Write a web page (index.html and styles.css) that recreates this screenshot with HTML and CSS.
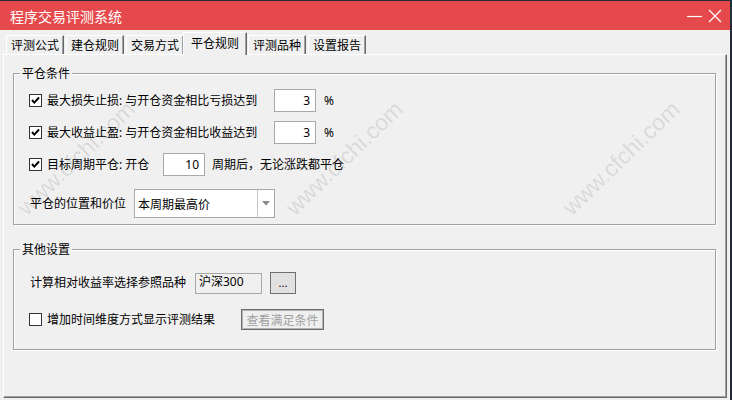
FILE: index.html
```html
<!DOCTYPE html>
<html lang="zh-CN">
<head>
<meta charset="utf-8">
<title>程序交易评测系统</title>
<link rel="stylesheet" href="styles.css">
</head>
<body>
<div class="screen">
  <div class="window">
    <div class="titlebar">
      <span class="title">程序交易评测系统</span>
      <div class="controls">
        <svg class="ic-min" width="15" height="3" viewBox="0 0 15 3"><line x1="0" y1="1.5" x2="15" y2="1.5" stroke="#fff" stroke-width="1.2"/></svg>
        <svg class="ic-close" width="14" height="14" viewBox="0 0 14 14"><path d="M1 1 L13 13 M13 1 L1 13" stroke="#fff" stroke-width="1.3" fill="none"/></svg>
      </div>
    </div>
    <div class="tabs">
      <div class="tab">评测公式</div>
      <div class="tab">建仓规则</div>
      <div class="tab">交易方式</div>
      <div class="tab active">平仓规则</div>
      <div class="tab">评测品种</div>
      <div class="tab">设置报告</div>
    </div>
    <div class="panel">
      <div class="group g1">
        <span class="group-title">平仓条件</span>
        <div class="row r-input">
          <span class="cb"><svg width="11" height="11" viewBox="0 0 11 11"><path d="M2 5 L4.3 7.6 L9 2.5" stroke="#000" stroke-width="2" fill="none"/></svg></span>
          <span class="lbl w-long">最大损失止损: 与开仓资金相比亏损达到</span>
          <span class="num">3</span>
          <span class="unit">%</span>
        </div>
        <div class="row r-input">
          <span class="cb"><svg width="11" height="11" viewBox="0 0 11 11"><path d="M2 5 L4.3 7.6 L9 2.5" stroke="#000" stroke-width="2" fill="none"/></svg></span>
          <span class="lbl w-long">最大收益止盈: 与开仓资金相比收益达到</span>
          <span class="num">3</span>
          <span class="unit">%</span>
        </div>
        <div class="row r-input">
          <span class="cb"><svg width="11" height="11" viewBox="0 0 11 11"><path d="M2 5 L4.3 7.6 L9 2.5" stroke="#000" stroke-width="2" fill="none"/></svg></span>
          <span class="lbl w-short">目标周期平仓: 开仓</span>
          <span class="num">10</span>
          <span class="after">周期后，无论涨跌都平仓</span>
        </div>
        <div class="row r-combo">
          <span class="lbl w-combo">平仓的位置和价位</span>
          <div class="combo">
            <span class="combo-text">本周期最高价</span>
            <span class="combo-btn"><svg width="8" height="5" viewBox="0 0 8 5"><path d="M0 0 L8 0 L4 4.5 Z" fill="#8a8a8a"/></svg></span>
          </div>
        </div>
      </div>
      <div class="group g2">
        <span class="group-title">其他设置</span>
        <div class="row r-ref">
          <span class="lbl">计算相对收益率选择参照品种</span>
          <span class="ref-box">沪深300</span>
          <span class="btn-more">...</span>
        </div>
        <div class="row r-time">
          <span class="cb"></span>
          <span class="lbl">增加时间维度方式显示评测结果</span>
          <span class="btn-disabled">查看满足条件</span>
        </div>
      </div>
    </div>
  </div>
  <div class="wm wm1">www.cfchi.com</div>
  <div class="wm wm2">www.cfchi.com</div>
  <div class="wm wm3">www.cfchi.com</div>
</div>
</body>
</html>
```

FILE: styles.css
```css
* { box-sizing: border-box; }
html, body { margin: 0; padding: 0; }
body {
  background: #262b38;
  font-family: "Noto Sans", "Noto Sans CJK SC", sans-serif;
  font-size: 12px;
  line-height: 16px;
  color: #000;
}
.screen {
  position: relative;
  width: 732px;
  height: 400px;
  overflow: hidden;
  background: #262b38;
}
.window {
  width: 730px;
  height: 399px;
  margin-top: 1px;
  background: #f0f0f0;
  display: flex;
  flex-direction: column;
}
.titlebar {
  height: 29px;
  flex: none;
  background: #e5494b;
  display: flex;
  align-items: center;
  justify-content: space-between;
  padding-left: 10px;
  padding-right: 8px;
}
.title {
  color: #fff;
  font-family: "Noto Sans CJK SC", sans-serif;
  font-size: 14px;
  line-height: 18px;
}
.controls {
  display: flex;
  align-items: center;
  gap: 6px;
}
.ic-min { display: block; margin-top: 2px; }
.ic-close { display: block; }

.tabs {
  flex: none;
  height: 22px;
  margin-top: 2px;
  padding-left: 6px;
  display: flex;
  align-items: flex-end;
  gap: 2px;
  position: relative;
  z-index: 1;
}
.tab {
  height: 19px;
  padding: 0 4px;
  border-top: 1px solid #fff;
  border-left: 1px solid #fff;
  border-right: 1px solid #696969;
  box-shadow: inset -1px 0 0 #a0a0a0;
  font-family: "Noto Sans CJK SC", sans-serif;
  line-height: 18px;
  white-space: nowrap;
  background: #f0f0f0;
}
.tab.active {
  height: 23px;
  margin-bottom: -1px;
  margin-left: -3px;
  margin-right: -1px;
  padding: 0 7px;
  line-height: 20px;
}
.panel {
  flex: none;
  width: 724px;
  height: 344px;
  margin-left: 3px;
  border-top: 1px solid #fff;
  border-left: 1px solid #fff;
  border-right: 1px solid #696969;
  border-bottom: 1px solid #696969;
  box-shadow: inset -1px -1px 0 #a0a0a0;
  padding: 18px 10px 0 9px;
}
.group {
  position: relative;
  border: 1px solid #a0a0a0;
  box-shadow: 1px 1px 0 #fff, inset 1px 1px 0 #fff;
  padding-left: 15px;
}
.group-title {
  position: absolute;
  top: -9px;
  left: 6px;
  padding: 0 2px;
  background: #f0f0f0;
  font-family: "Noto Sans CJK SC", sans-serif;
  line-height: 16px;
}
.g1 { padding-top: 15px; padding-bottom: 6px; }
.g2 { margin-top: 24px; padding-top: 22px; padding-bottom: 19px; }

.row {
  display: flex;
  align-items: center;
  white-space: nowrap;
}
.lbl, .after {
  font-family: "Noto Sans", "Noto Sans CJK SC", sans-serif;
  line-height: 16px;
  flex: none;
}
.r-input { height: 23px; }
.r-input + .r-input { margin-top: 9px; }
.r-combo { height: 29px; margin-top: 13px; }

.cb {
  flex: none;
  width: 13px;
  height: 13px;
  border: 1px solid #333;
  background: #fff;
  margin-right: 5px;
  display: flex;
  align-items: center;
  justify-content: center;
}
.cb svg { display: block; }
.w-long { width: 227px; }
.w-short { width: 116px; }
.w-combo { width: 104px; margin-left: 1px; }
.num {
  flex: none;
  width: 42px;
  height: 23px;
  background: #fff;
  border: 1px solid #a8a8a8;
  text-align: right;
  padding-right: 5px;
  line-height: 21px;
}
.unit { margin-left: 8px; }
.after { margin-left: 7px; }

.combo {
  flex: none;
  width: 141px;
  height: 29px;
  background: #fff;
  border: 1px solid #a8a8a8;
  display: flex;
  align-items: stretch;
}
.combo-text {
  flex: 1;
  padding-left: 3px;
  line-height: 27px;
  font-family: "Noto Sans CJK SC", sans-serif;
}
.combo-btn {
  flex: none;
  width: 17px;
  border-left: 1px solid #c8c8c8;
  display: flex;
  align-items: center;
  justify-content: center;
}
.combo-btn svg { display: block; }

.r-ref { height: 22px; padding-left: 1px; }
.r-ref .lbl { width: 165px; }
.ref-box {
  flex: none;
  width: 67px;
  height: 21px;
  margin-top: 1px;
  border: 1px solid #a8a8a8;
  background: #f0f0f0;
  padding-left: 3px;
  line-height: 16px;
}
.btn-more {
  flex: none;
  width: 26px;
  height: 22px;
  margin-left: 8px;
  border: 1px solid #707070;
  background: #e1e1e1;
  text-align: center;
  line-height: 20px;
  font-size: 11px;
}
.r-time { height: 21px; margin-top: 15px; }
.r-time .lbl { width: 194px; }
.btn-disabled {
  flex: none;
  width: 83px;
  height: 21px;
  border: 1px solid #6d6d6d;
  box-shadow: inset 0 0 0 1px #b4b4b4;
  background: #efefef;
  color: #a0a0a0;
  text-align: center;
  line-height: 19px;
  font-family: "Noto Sans CJK SC", sans-serif;
}

.wm {
  position: absolute;
  width: 152px;
  height: 28px;
  line-height: 28px;
  text-align: center;
  font-family: "Liberation Sans", sans-serif;
  font-size: 23px;
  color: rgba(0, 0, 0, 0.11);
  transform: rotate(-44deg);
  pointer-events: none;
  white-space: nowrap;
}
.wm1 { left: 0; top: 144px; }
.wm2 { left: 268px; top: 144px; }
.wm3 { left: 545px; top: 144px; }
```
